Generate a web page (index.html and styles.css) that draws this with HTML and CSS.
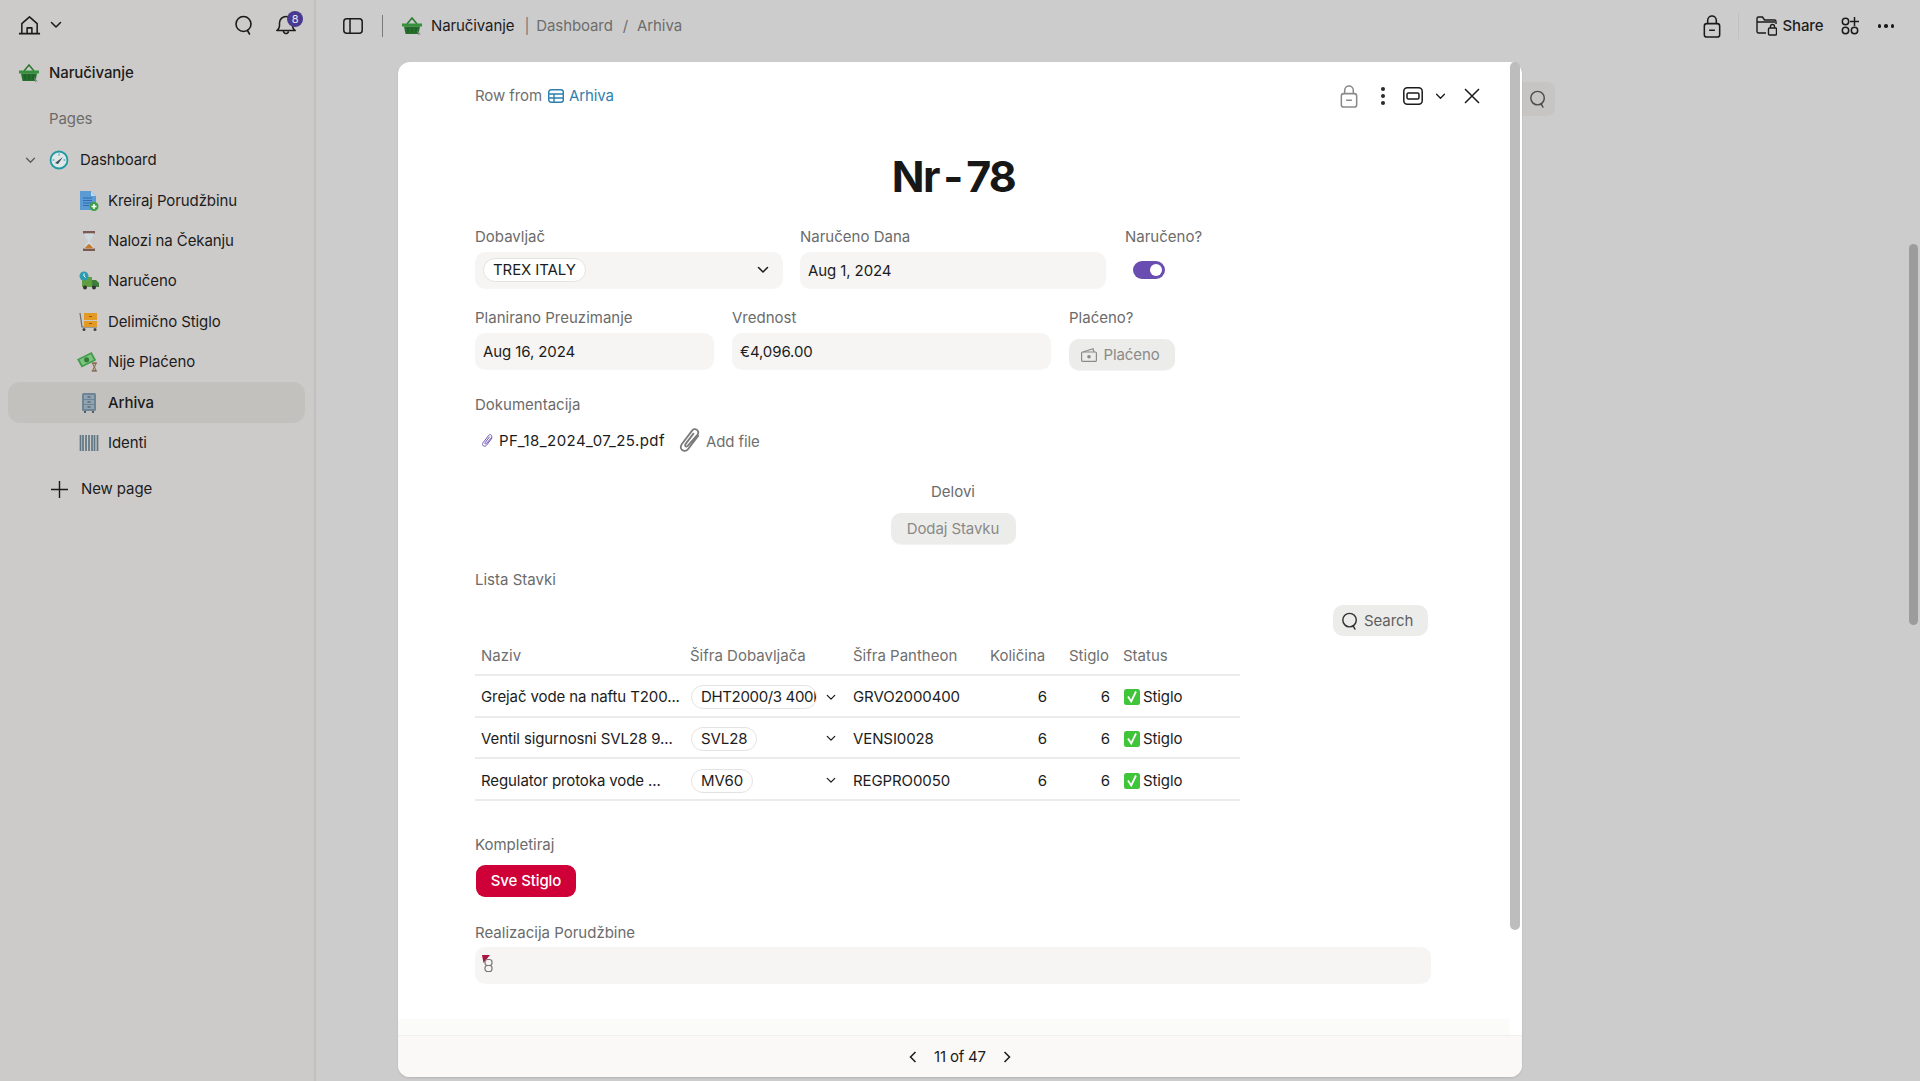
FILE: index.html
```html
<!DOCTYPE html>
<html lang="sr">
<head>
<meta charset="utf-8">
<title>Arhiva</title>
<link rel="stylesheet" href="styles.css">
</head>
<body>
<svg class="defs" width="0" height="0" aria-hidden="true">
  <symbol id="basket" viewBox="0 0 20 20">
    <path d="M5 8 10 2l5 6" fill="none" stroke="#2c7a32" stroke-width="1.6"/>
    <path d="M0 7.5h20v3H0z" fill="#35913c"/>
    <path d="M2 10.5h16l-1.5 7.500h-13z" fill="#246f2c"/>
    <path d="M6 11.500v5M10 11.500v5M14 11.500v5" stroke="#1c5a23" stroke-width="1"/>
    <path d="M15 14l4 4.500-1.800-.2-.7 1.500z" fill="#8c8c8c"/>
  </symbol>
  <symbol id="search" viewBox="0 0 20 20">
    <circle cx="9.500" cy="9" r="7.500" fill="none" stroke="currentColor" stroke-width="1.600"/>
    <path d="m13.500 15.500 2 3.500" fill="none" stroke="currentColor" stroke-width="1.600" stroke-linecap="round"/>
  </symbol>
  <symbol id="lock" viewBox="0 0 18 24">
    <rect x="1" y="9" width="16" height="14" rx="2.500" fill="none" stroke="currentColor" stroke-width="1.600"/>
    <path d="M4.500 9V5.500a4.500 4.500 0 0 1 9 0V9M6 16h6" fill="none" stroke="currentColor" stroke-width="1.600"/>
  </symbol>
  <symbol id="chev" viewBox="0 0 12 8">
    <path d="m1.500 1.500 4.500 4.500 4.500-4.500" fill="none" stroke="currentColor" stroke-width="1.500" stroke-linecap="round" stroke-linejoin="round"/>
  </symbol>
  <symbol id="clip" viewBox="0 0 16 20">
    <path d="M13.500 6.500 6.800 15.300c-1.100 1.400-2.900 1.600-4 .7-1.200-.9-1.300-2.600-.2-4l6.800-8.900c.8-1.100 2.200-1.300 3.200-.5s1.100 2.200.3 3.300L6.500 13.200c-.4.500-1 .6-1.400.3-.4-.3-.5-.9-.1-1.400l5.300-7" fill="none" stroke="currentColor" stroke-width="1.200" stroke-linecap="round"/>
  </symbol>
  <symbol id="check" viewBox="0 0 16 16">
    <rect width="16" height="16" rx="2.500" fill="#3fc43a"/>
    <path d="m4 7.500 3.200 5L12 2.500" fill="none" stroke="#fff" stroke-width="1.800"/>
  </symbol>
</svg>

<aside class="sidebar">
  <div class="side-top">
    <div class="side-home">
      <svg class="i-home" viewBox="0 0 24 20"><path d="M1 19h22M4 19V8.500L12 1.500l8 7V19M9.500 19v-6h5v6" fill="none" stroke="#1a1a1a" stroke-width="1.600" stroke-linejoin="round"/></svg>
      <svg class="i-chev-m"><use href="#chev"/></svg>
    </div>
    <div class="side-actions">
      <svg class="i-search-top"><use href="#search"/></svg>
      <div class="bell">
        <svg class="i-bell" viewBox="0 0 20 20"><path d="M.8 15.500c1.500-1 2.700-2.500 2.700-5V8a6.500 6.500 0 0 1 13 0v2.500c0 2.500 1.200 4 2.700 5zM7.500 15.500a2.500 2.500 0 0 0 5 1" fill="none" stroke="#1a1a1a" stroke-width="1.500" stroke-linejoin="round"/></svg>
        <span class="badge">8</span>
      </div>
    </div>
  </div>
  <div class="side-title"><svg class="i-20"><use href="#basket"/></svg><span>Naručivanje</span></div>
  <div class="side-pages">Pages</div>
  <nav class="side-nav">
    <div class="nav-row nav-parent">
      <svg class="i-chev-s"><use href="#chev"/></svg>
      <svg class="i-20" viewBox="0 0 20 20"><circle cx="10" cy="10" r="8.500" fill="#dfe7e8" stroke="#1f9aa3" stroke-width="1.800"/><path d="m6 13 8-6-5 7z" fill="#3a4a55"/><path d="M10 3.500v2M3.500 10h2M16.500 10h-2" stroke="#1f9aa3"/></svg>
      <span>Dashboard</span>
    </div>
    <div class="nav-row nav-child">
      <svg class="i-20" viewBox="0 0 20 20"><path d="M1 0h11l5 5v14H1z" fill="#5b9bd5"/><path d="M12 0v5h5z" fill="#bcd8f0"/><path d="M4 7h9M4 9.500h9M4 12h9M4 14.500h6" stroke="#2f6cb0"/><circle cx="15" cy="15.500" r="4.500" fill="#3d9e46"/><path d="M15 13v5M12.500 15.500h5" stroke="#fff" stroke-width="1.500"/></svg>
      <span>Kreiraj Porudžbinu</span>
    </div>
    <div class="nav-row nav-child">
      <svg class="i-20" viewBox="0 0 20 20"><path d="M4 0h12v2.500H4zM4 17.500h12V20H4z" fill="#7a5a52"/><path d="M5.500 2.500h9c0 4.500-3.500 5.500-3.500 7.500s3.500 3 3.500 7.500h-9c0-4.500 3.500-5.500 3.500-7.500S5.500 7 5.500 2.500" fill="#cfd8dc"/><path d="M6 17.500c.5-2 2.500-3.500 4-4.500 1.500 1 3.500 2.500 4 4.500z" fill="#c47a2c"/></svg>
      <span>Nalozi na Čekanju</span>
    </div>
    <div class="nav-row nav-child">
      <svg class="i-20" viewBox="0 0 20 20"><path d="M3 6h10v10H3z" fill="#5f9e41"/><path d="M13 9h4l3 3v4h-7z" fill="#3e7d3a"/><circle cx="6" cy="16.500" r="2" fill="#333"/><circle cx="15" cy="16.500" r="2" fill="#333"/><circle cx="5" cy="5" r="4.500" fill="#2b9bb0"/><path d="M5 2.500V5l1.500 1.500" stroke="#fff" fill="none"/></svg>
      <span>Naručeno</span>
    </div>
    <div class="nav-row nav-child">
      <svg class="i-20" viewBox="0 0 20 20"><path d="M1 1l2 14h15" fill="none" stroke="#6d6a62" stroke-width="1.200"/><path d="M5 1h13v7H5zM5 9h13v6H5z" fill="#e39a24"/><path d="M10 4.500h3M10 11.500h3" stroke="#8a5a10"/><circle cx="5" cy="17.500" r="1.500" fill="#444"/><circle cx="16" cy="17.500" r="1.500" fill="#444"/></svg>
      <span>Delimično Stiglo</span>
    </div>
    <div class="nav-row nav-child">
      <svg class="i-20 i-money" viewBox="0 0 24 22"><path d="M0 8 16 0l5 9-16 8z" fill="#3f9e4a"/><path d="M2.500 8.500l12.500-6 3.500 6-12.500 6z" fill="#7fc27e"/><circle cx="10.500" cy="8.500" r="2.800" fill="#2f7d38"/><path d="M16 12h6M16 21h6M17 12.500h4l-1.800 4 1.800 4h-4l1.800-4z" fill="#c9b99c" stroke="#7a6048"/></svg>
      <span>Nije Plaćeno</span>
    </div>
    <div class="nav-row nav-child nav-active">
      <svg class="i-20" viewBox="0 0 20 20"><rect x="3" y="0" width="14" height="18" rx="1.500" fill="#6d8494"/><path d="M5 2h10v4H5zM5 7h10v4H5zM5 12h10v4H5z" fill="#8fa3b0"/><path d="M8.500 4h3M8.500 9h3M8.500 14h3" stroke="#3e4f5b"/><path d="M5 18h2v2H5zM13 18h2v2h-2z" fill="#4d5f6c"/></svg>
      <span>Arhiva</span>
    </div>
    <div class="nav-row nav-child">
      <svg class="i-20" viewBox="0 0 20 20"><path d="M1.500 2v16M4 2v16M7 2v16M10 2v16M13 2v16M15.500 2v16M18.500 2v16" stroke="#5e7684" stroke-width="1.700" fill="none"/></svg>
      <span>Identi</span>
    </div>
    <div class="nav-row nav-new">
      <svg class="i-plus" viewBox="0 0 18 18"><path d="M9 0v18M0 9h18" stroke="#1a1a1a" stroke-width="1.500"/></svg>
      <span>New page</span>
    </div>
  </nav>
</aside>

<main class="main">
  <header class="topbar">
    <div class="crumbs">
      <svg class="i-panel" viewBox="0 0 20 16"><rect x=".8" y=".8" width="18.400" height="14.400" rx="3" fill="none" stroke="#1a1a1a" stroke-width="1.500"/><path d="M7 1v14" stroke="#1a1a1a" stroke-width="1.500"/></svg>
      <span class="vbar"></span>
      <svg class="i-20"><use href="#basket"/></svg>
      <span class="crumb-app">Naručivanje</span>
      <span class="crumb-sep">|</span>
      <span class="crumb">Dashboard</span>
      <span class="crumb crumb-slash">/</span>
      <span class="crumb">Arhiva</span>
    </div>
    <div class="top-actions">
      <svg class="i-lock"><use href="#lock"/></svg>
      <span class="vbar-light"></span>
      <svg class="i-folder" viewBox="0 0 21 20"><path d="M10 17H2.500A1.500 1.500 0 0 1 1 15.500v-13A1.500 1.500 0 0 1 2.500 1h4l2 3h10A1.500 1.500 0 0 1 20 5.500V8M1 6h18" fill="none" stroke="#1a1a1a" stroke-width="1.400"/><rect x="12.500" y="12" width="8" height="7" rx="1" fill="none" stroke="#1a1a1a" stroke-width="1.400"/><path d="M14.500 12v-1.500a2 2 0 0 1 4 0V12" fill="none" stroke="#1a1a1a" stroke-width="1.400"/></svg>
      <span class="share">Share</span>
      <svg class="i-apps" viewBox="0 0 18 18"><circle cx="4.500" cy="4.500" r="3.200" fill="none" stroke="#1a1a1a" stroke-width="1.500"/><circle cx="4.500" cy="13.500" r="3.200" fill="none" stroke="#1a1a1a" stroke-width="1.500"/><circle cx="13.500" cy="13.500" r="3.200" fill="none" stroke="#1a1a1a" stroke-width="1.500"/><path d="M13.500 0v9M9 4.500h9" stroke="#1a1a1a" stroke-width="1.500"/></svg>
      <span class="dots-h"><i></i><i></i><i></i></span>
    </div>
  </header>
  <div class="canvas"></div>
</main>

<div class="peek-search"><svg class="i-search-peek"><use href="#search"/></svg></div>
<div class="page-thumb"></div>

<section class="modal">
  <div class="modal-track"></div>
  <div class="modal-body">
    <div class="modal-head">
      <div class="row-from">
        <span>Row from</span>
        <svg class="i-table" viewBox="0 0 16 14"><rect x=".7" y=".7" width="14.600" height="12.600" rx="2.500" fill="none" stroke="#2e7fb0" stroke-width="1.400"/><path d="M1 5h14M1 9h14M6 5v8" stroke="#2e7fb0" stroke-width="1.400"/></svg>
        <span class="link">Arhiva</span>
      </div>
      <div class="modal-tools">
        <svg class="i-lock-gray"><use href="#lock"/></svg>
        <span class="dots-v"><i></i><i></i><i></i></span>
        <svg class="i-view" viewBox="0 0 20 18"><rect x=".8" y=".8" width="18.400" height="16.400" rx="3.500" fill="none" stroke="#1a1a1a" stroke-width="1.500"/><rect x="4" y="6" width="12" height="6" rx="1.500" fill="none" stroke="#1a1a1a" stroke-width="1.500"/></svg>
        <svg class="i-chev-t"><use href="#chev"/></svg>
        <svg class="i-close" viewBox="0 0 16 16"><path d="m1 1 14 14M15 1 1 15" stroke="#1a1a1a" stroke-width="1.500"/></svg>
      </div>
    </div>

    <h1 class="title">Nr - 78</h1>

    <div class="form-row row-one">
      <div class="field">
        <label class="lbl">Dobavljač</label>
        <div class="box box-select"><span class="chip">TREX ITALY</span><svg class="i-chev-b"><use href="#chev"/></svg></div>
      </div>
      <div class="field">
        <label class="lbl">Naručeno Dana</label>
        <div class="box">Aug 1, 2024</div>
      </div>
      <div class="field">
        <label class="lbl">Naručeno?</label>
        <div class="toggle"><span></span></div>
      </div>
    </div>

    <div class="form-row row-two">
      <div class="field">
        <label class="lbl">Planirano Preuzimanje</label>
        <div class="box">Aug 16, 2024</div>
      </div>
      <div class="field">
        <label class="lbl">Vrednost</label>
        <div class="box">€4,096.00</div>
      </div>
      <div class="field">
        <label class="lbl">Plaćeno?</label>
        <div class="btn-disabled btn-paid">
          <svg class="i-cash" viewBox="0 0 16 14"><rect x=".6" y="4" width="14.800" height="9.400" rx="1" fill="none" stroke="#8a8a88" stroke-width="1.200"/><circle cx="8" cy="8.700" r="1.800" fill="#8a8a88"/><path d="M2 4 12 .8 13 4" fill="none" stroke="#8a8a88" stroke-width="1.200"/></svg>
          <span>Plaćeno</span>
        </div>
      </div>
    </div>

    <label class="lbl lbl-doc">Dokumentacija</label>
    <div class="files">
      <svg class="i-clip-s"><use href="#clip"/></svg>
      <span class="file-name">PF_18_2024_07_25.pdf</span>
      <svg class="i-clip-l"><use href="#clip"/></svg>
      <span class="add-file">Add file</span>
    </div>

    <div class="parts">
      <span class="lbl">Delovi</span>
      <div class="btn-disabled btn-add">Dodaj Stavku</div>
    </div>

    <div class="lbl lbl-list">Lista Stavki</div>

    <div class="table-tools">
      <div class="btn-search"><svg class="i-search-btn"><use href="#search"/></svg><span>Search</span></div>
    </div>

    <div class="table">
      <div class="tr th">
        <span>Naziv</span><span>Šifra Dobavljača</span><span>Šifra Pantheon</span><span class="num num-kol">Količina</span><span class="num">Stiglo</span><span>Status</span>
      </div>
      <div class="tr">
        <span>Grejač vode na naftu T200...</span>
        <span class="td-chip"><span class="chip chip-clip">DHT2000/3 400kW</span><svg class="i-chev-r"><use href="#chev"/></svg></span>
        <span>GRVO2000400</span><span class="num">6</span><span class="num">6</span>
        <span class="status"><svg class="i-check"><use href="#check"/></svg>Stiglo</span>
      </div>
      <div class="tr">
        <span>Ventil sigurnosni SVL28 9...</span>
        <span class="td-chip"><span class="chip">SVL28</span><svg class="i-chev-r"><use href="#chev"/></svg></span>
        <span>VENSI0028</span><span class="num">6</span><span class="num">6</span>
        <span class="status"><svg class="i-check"><use href="#check"/></svg>Stiglo</span>
      </div>
      <div class="tr">
        <span>Regulator protoka vode ...</span>
        <span class="td-chip"><span class="chip">MV60</span><svg class="i-chev-r"><use href="#chev"/></svg></span>
        <span>REGPRO0050</span><span class="num">6</span><span class="num">6</span>
        <span class="status"><svg class="i-check"><use href="#check"/></svg>Stiglo</span>
      </div>
    </div>

    <div class="lbl lbl-complete">Kompletiraj</div>
    <div class="btn-red">Sve Stiglo</div>

    <label class="lbl lbl-real">Realizacija Porudžbine</label>
    <div class="box-wide">
      <svg class="i-mini" viewBox="0 0 12 18"><path d="M0 0h8L1.500 8z" fill="#a8173f"/><rect x="3" y="4.500" width="7" height="6" rx="2.500" fill="none" stroke="#777" stroke-width="1.200"/><rect x="3" y="10.500" width="7" height="6" rx="2.500" fill="none" stroke="#777" stroke-width="1.200"/></svg>
    </div>
  </div>
  <div class="prefoot"></div>
  <footer class="modal-foot">
    <svg class="i-pg" viewBox="0 0 8 12"><path d="M6.500 1 1.500 6l5 5" fill="none" stroke="#1a1a1a" stroke-width="1.500"/></svg>
    <span class="pg-text">11 of 47</span>
    <svg class="i-pg" viewBox="0 0 8 12"><path d="m1.500 1 5 5-5 5" fill="none" stroke="#1a1a1a" stroke-width="1.500"/></svg>
  </footer>
</section>
</body>
</html>
```

FILE: styles.css
```css
* { box-sizing: border-box; }
html, body { margin: 0; height: 1081px; overflow: hidden; }
body {
  display: flex;
  background: #cccccc;
  font-family: "Inter", "Liberation Sans", sans-serif;
  font-size: 15px;
  line-height: 20px;
  color: #1c1c1c;
  letter-spacing: -0.1px;
}
svg { display: block; flex: none; }
.defs { position: absolute; }
.i-20 { width: 20px; height: 20px; }

/* sidebar */
.sidebar {
  width: 316px;
  flex: none;
  height: 1081px;
  background: #cdcbca;
  border-right: 2px solid #c2c1c0;
  display: flex;
  flex-direction: column;
}
.side-top {
  height: 50px;
  padding: 0 9px 0 18px;
  display: flex;
  align-items: center;
  justify-content: space-between;
}
.side-home, .side-actions { display: flex; align-items: center; }
.i-home { width: 23px; height: 20px; }
.i-chev-m { width: 12px; height: 8px; margin-left: 9px; color: #1a1a1a; }
.i-search-top { width: 20px; height: 20px; margin-right: 22px; color: #1a1a1a; }
.bell { position: relative; width: 29px; height: 20px; }
.i-bell { width: 20px; height: 20px; }
.badge {
  position: absolute;
  left: 11px;
  top: -4px;
  width: 16px;
  height: 16px;
  border-radius: 50%;
  background: #4a3a8f;
  color: #e8e6f2;
  font-size: 11px;
  line-height: 16px;
  text-align: center;
}
.side-title {
  margin-top: 13px;
  height: 20px;
  padding-left: 19px;
  display: flex;
  align-items: center;
  gap: 10px;
  font-weight: 500;
}
.side-pages { margin-top: 26px; height: 20px; padding-left: 49px; color: #6c6b6a; }
.side-nav { margin-top: 11px; display: flex; flex-direction: column; }
.nav-row { height: 40.4px; display: flex; align-items: center; }
.nav-parent { padding-left: 25px; }
.i-chev-s { width: 11px; height: 7px; margin-right: 13px; color: #5a5a5a; }
.nav-parent .i-20 { margin-right: 11px; }
.nav-child { gap: 9px; margin: 0 9px 0 8px; padding-left: 71px; border-radius: 12px; }
.i-money { width: 22px; height: 20px; margin-left: -2px; margin-right: 0; }
.nav-active { background: #c3c1be; font-weight: 500; }
.nav-new { margin-top: 6px; padding-left: 51px; gap: 13px; }
.i-plus { width: 17px; height: 17px; }

/* main */
.main { flex: 1; display: flex; flex-direction: column; min-width: 0; }
.topbar {
  height: 52px;
  display: flex;
  align-items: center;
  justify-content: space-between;
  padding: 0 26px 0 27px;
}
.crumbs, .top-actions { display: flex; align-items: center; }
.i-panel { width: 20px; height: 16px; }
.vbar { width: 1px; height: 22px; background: #7b7b7b; margin: 0 19px; }
.crumb-app { margin-left: 9px; }
.crumb-sep { margin: 0 7px 0 10px; color: #777; }
.crumb { color: #6d6d6d; }
.crumb-slash { margin: 0 9px 0 10px; }
.i-lock { width: 18px; height: 23px; color: #1a1a1a; }
.vbar-light { width: 1px; height: 26px; background: #c1c1c1; margin: 0 17px 0 17px; }
.i-folder { width: 21px; height: 20px; }
.share { margin-left: 5px; font-weight: 500; }
.i-apps { width: 18px; height: 18px; margin-left: 17px; }
.dots-h { display: flex; gap: 3px; margin-left: 19px; }
.dots-h i { width: 3.500px; height: 3.500px; border-radius: 50%; background: #1a1a1a; }
.canvas { flex: 1; }

.peek-search {
  position: absolute;
  left: 1521px;
  top: 82px;
  width: 34px;
  height: 34px;
  border-radius: 0 8px 8px 0;
  background: #c6c5c3;
  display: flex;
  align-items: center;
  justify-content: center;
}
.i-search-peek { width: 18px; height: 20px; color: #4c4c4c; }
.page-thumb {
  position: absolute;
  left: 1909px;
  top: 244px;
  width: 9px;
  height: 381px;
  border-radius: 5px;
  background: #9c9c9c;
}

/* modal */
.modal {
  position: absolute;
  left: 398px;
  top: 62px;
  width: 1124px;
  height: 1015px;
  background: #fff;
  border-radius: 12px;
  display: flex;
  flex-direction: column;
  box-shadow: 0 1px 2px rgba(0, 0, 0, .12);
}
.modal-track {
  position: absolute;
  right: 2px;
  top: 0;
  width: 10px;
  height: 868px;
  background: #bdbdbd;
  border-radius: 5px;
}
.modal-body {
  flex: 1;
  min-height: 0;
  padding: 22px 0 0 77px;
  display: flex;
  flex-direction: column;
  align-items: flex-start;
}
.modal-head {
  width: 1005px;
  height: 24px;
  display: flex;
  align-items: center;
  justify-content: space-between;
}
.row-from { display: flex; align-items: center; color: #6f6f6f; }
.i-table { width: 16px; height: 14px; margin: 0 5px 0 6px; }
.link { color: #2e7fb0; }
.modal-tools { display: flex; align-items: center; }
.i-lock-gray { width: 18px; height: 23px; color: #8a8a8a; }
.dots-v { display: flex; flex-direction: column; gap: 3px; margin: 0 18px 0 23px; }
.dots-v i { width: 4px; height: 4px; border-radius: 50%; background: #2a2a2a; }
.i-view { width: 20px; height: 18px; }
.i-chev-t { width: 11px; height: 7px; margin-left: 12px; color: #1a1a1a; }
.i-close { width: 16px; height: 16px; margin-left: 18px; }

.title {
  width: 957px;
  margin: 42px 0 0;
  height: 52px;
  text-align: center;
  font-size: 43px;
  line-height: 52px;
  font-weight: 700;
  letter-spacing: -1.700px;
  word-spacing: -4px;
  color: #171717;
}

.form-row { display: grid; }
.row-one { margin-top: 25px; grid-template-columns: 308px 306px 60px; column-gap: 17px; }
.row-two { margin-top: 20px; grid-template-columns: 239px 319px 106px; column-gap: 18px; }
.row-one .field:last-child { margin-left: 2px; width: 80px; white-space: nowrap; }
.field { display: flex; flex-direction: column; align-items: stretch; }
.lbl { display: block; height: 20px; color: #6b6b6b; white-space: nowrap; letter-spacing: 0; }
.box {
  margin-top: 5px;
  height: 36px;
  border-radius: 10px;
  background: #f6f5f3;
  box-shadow: 0 1px 1px rgba(0, 0, 0, .04);
  padding: 2px 8px 0;
  display: flex;
  align-items: center;
  color: #1c1c1c;
}
.box-select { justify-content: space-between; padding: 0 14px 0 8px; }
.chip {
  height: 24px;
  padding: 0 9px;
  border: 1px solid #e3e3e1;
  border-radius: 12px;
  background: #fff;
  line-height: 22px;
  display: inline-block;
  white-space: nowrap;
}
.i-chev-b { width: 12px; height: 8px; color: #1a1a1a; }
.toggle {
  margin: 14px 0 0 8px;
  width: 32px;
  height: 18px;
  border-radius: 9px;
  background: #6a4db0;
  position: relative;
}
.toggle span {
  position: absolute;
  right: 3px;
  top: 3px;
  width: 12px;
  height: 12px;
  border-radius: 50%;
  background: #fff;
}
.btn-disabled {
  border-radius: 10px;
  background: #ececea;
  color: #8a8a88;
  display: flex;
  align-items: center;
  justify-content: center;
  box-shadow: 0 1px 1px rgba(0, 0, 0, .05);
}
.btn-paid { margin-top: 11px; width: 106px; height: 31px; gap: 6px; padding-right: 3px; }
.i-cash { width: 16px; height: 14px; }

.lbl-doc { margin-top: 25px; }
.files { margin-top: 13px; height: 26px; display: flex; align-items: center; padding-left: 6px; }
.i-clip-s { width: 13px; height: 16px; color: #6a4db0; margin-right: 5px; }
.file-name { color: #1c1c1c; letter-spacing: .45px; }
.i-clip-l { width: 24px; height: 30px; margin: 0 -2px 0 13px; color: #7a7a7a; }
.add-file { margin-left: 6px; color: #6f6f6f; margin-top: 2px; }

.parts {
  width: 956px;
  margin-top: 28px;
  display: flex;
  flex-direction: column;
  align-items: center;
}
.btn-add { margin-top: 11px; width: 125px; height: 31px; }
.lbl-list { margin-top: 26px; }
.table-tools { width: 953px; margin-top: 15px; display: flex; justify-content: flex-end; }
.btn-search {
  width: 95px;
  height: 31px;
  border-radius: 10px;
  background: #ececea;
  display: flex;
  align-items: center;
  padding-left: 8px;
  gap: 5px;
  color: #5f5f5f;
}
.i-search-btn { width: 18px; height: 20px; color: #333; }

.table { width: 765px; display: flex; flex-direction: column; }
.tr {
  display: grid;
  grid-template-columns: 209px 162px 138px 69px 63px 124px;
  height: 41.670px;
  padding-top: 3px;
  align-items: center;
  border-bottom: 2px solid #ebebe9;
  white-space: nowrap;
}
.tr > * { padding: 0 6px; min-width: 0; }
.tr > :nth-child(3) { padding-left: 7px; }
.th { height: 40px; padding-top: 2px; color: #6f6f6f; letter-spacing: 0; }
.num { text-align: right; }
.th .num { padding-right: 7px; }
.th .num-kol { padding-right: 8px; }
.td-chip { display: flex; align-items: center; justify-content: space-between; padding-left: 7px !important; padding-right: 10px !important; }
.chip-clip { width: 126px; overflow: hidden; letter-spacing: -.35px; }
.i-chev-r { width: 10px; height: 7px; color: #1a1a1a; }
.status { display: flex; align-items: center; gap: 3px; padding-left: 8px !important; }
.th > :last-child { padding-left: 7px; }
.i-check { width: 16px; height: 16px; }

.lbl-complete { margin-top: 34px; }
.btn-red {
  margin-top: 10px;
  margin-left: 1px;
  width: 100px;
  height: 32px;
  border-radius: 9px;
  background: #cf0038;
  color: #fff;
  font-weight: 500;
  display: flex;
  align-items: center;
  justify-content: center;
}
.lbl-real { margin-top: 26px; }
.box-wide {
  margin-top: 4px;
  width: 956px;
  height: 36px;
  border-radius: 10px;
  background: #f6f5f3;
  box-shadow: 0 1px 1px rgba(0, 0, 0, .04);
  padding: 8px 0 0 7px;
}
.i-mini { width: 12px; height: 18px; }
.prefoot { height: 16px; margin-right: 13px; background: #fbfbfa; }
.modal-foot {
  height: 42px;
  flex: none;
  background: #faf9f8;
  border-top: 1px solid #efefed;
  border-radius: 0 0 12px 12px;
  display: flex;
  align-items: center;
  justify-content: center;
  gap: 17px;
}
.pg-text { letter-spacing: -0.2px; }
.i-pg { width: 8px; height: 12px; }
```
